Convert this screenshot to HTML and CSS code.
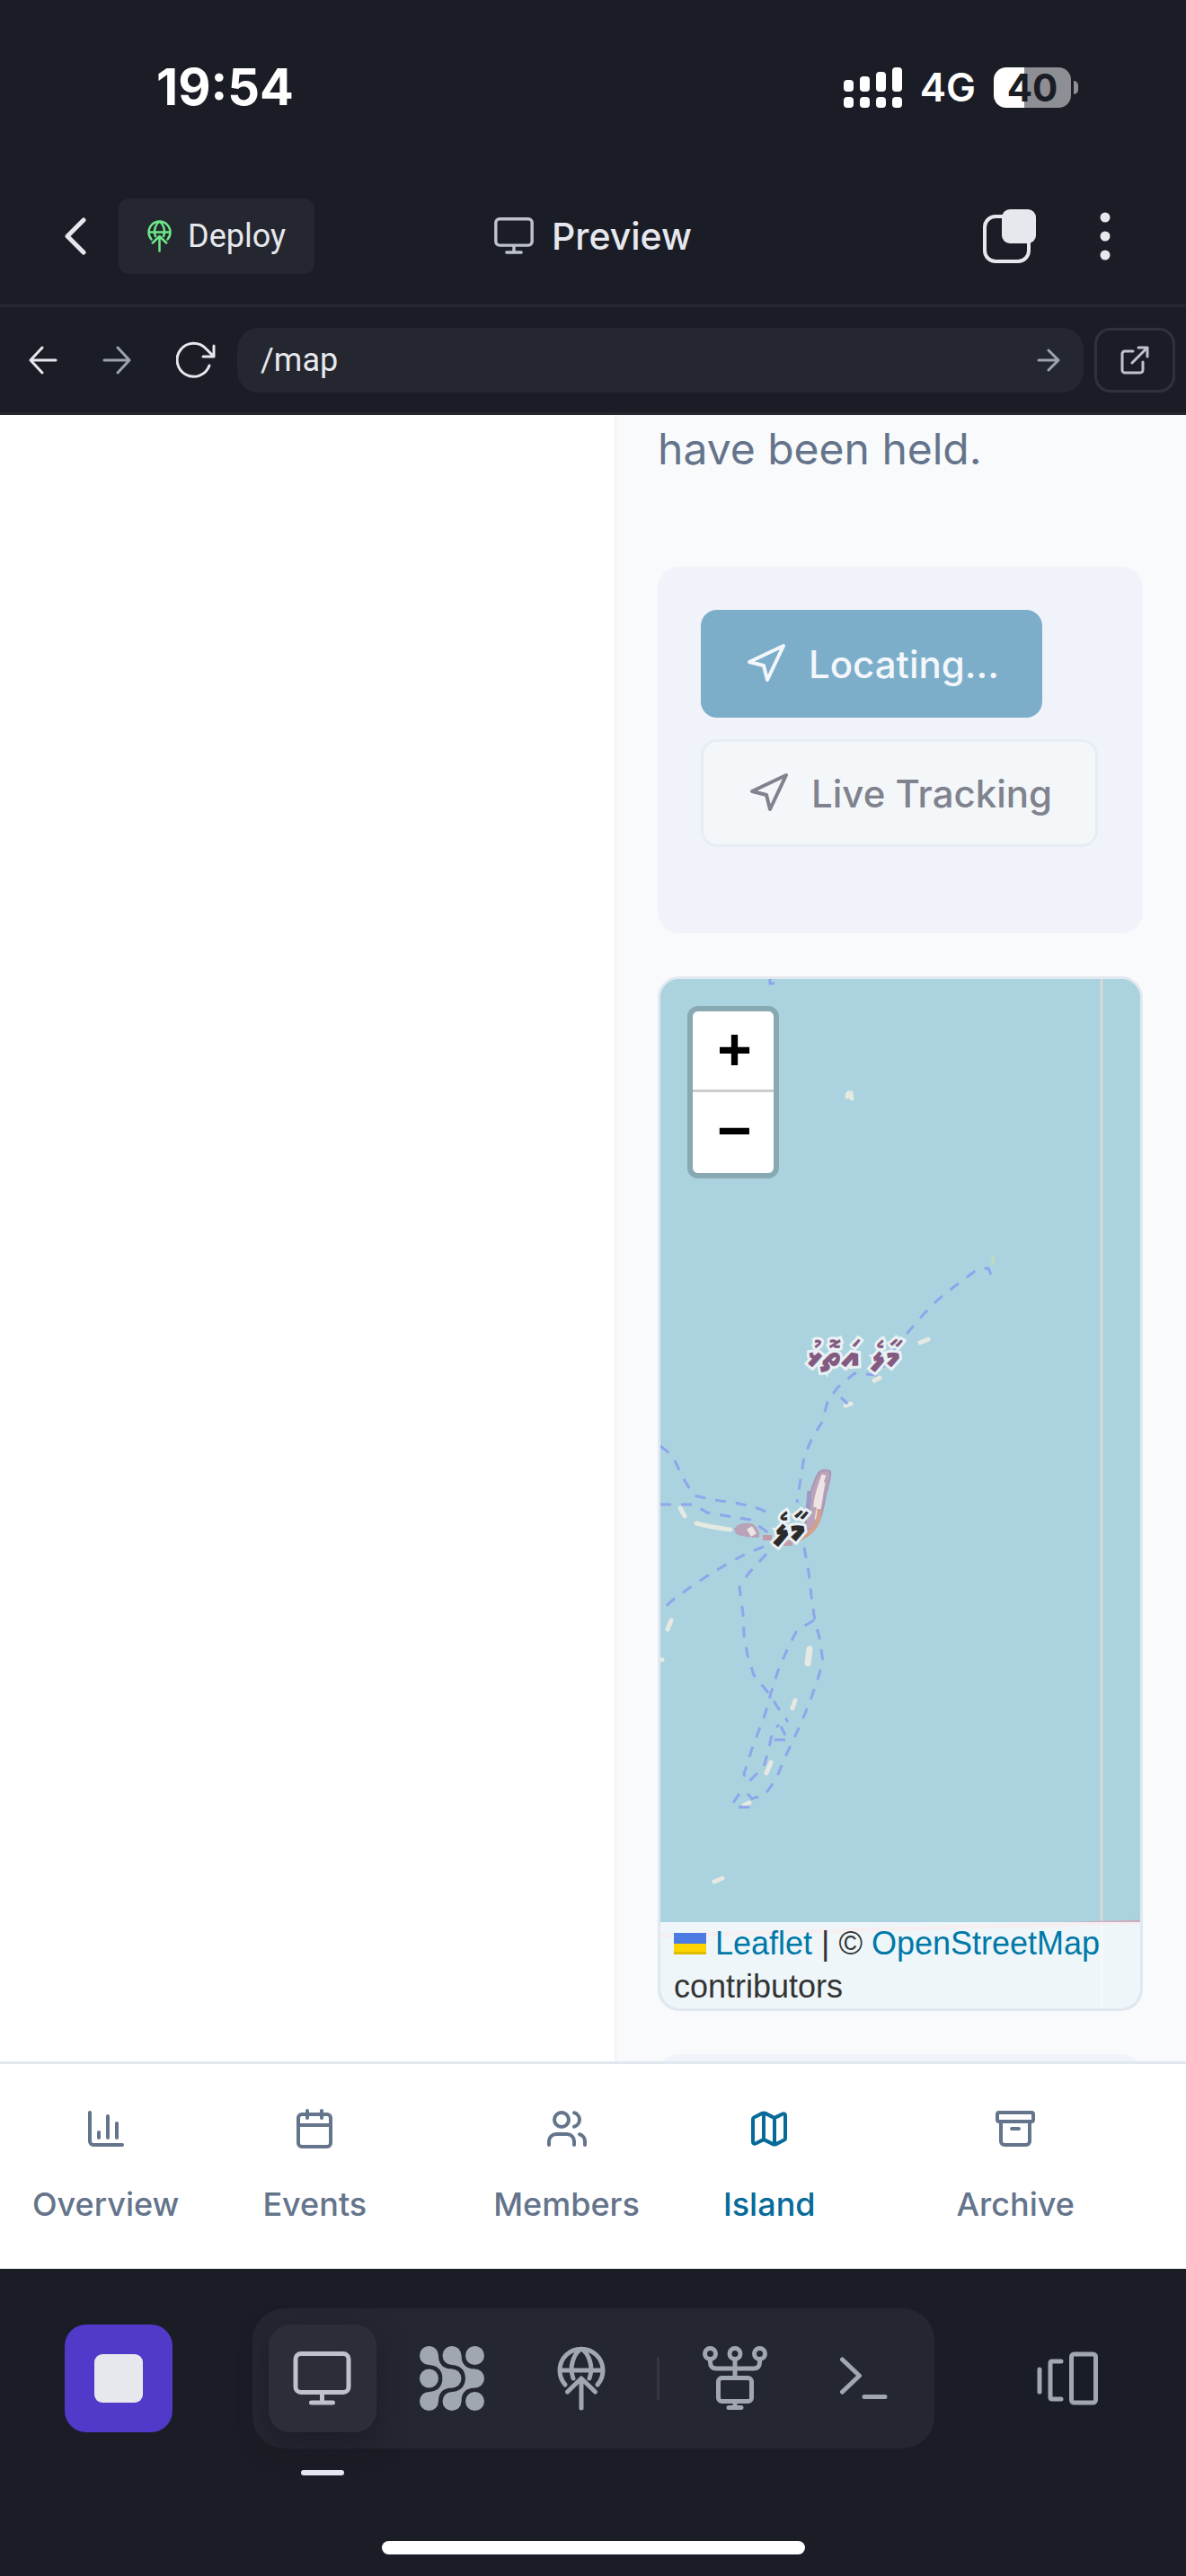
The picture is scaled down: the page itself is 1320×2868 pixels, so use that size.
FILE: index.html
```html
<!DOCTYPE html>
<html lang="en">
<head>
<meta charset="utf-8">
<meta name="viewport" content="width=device-width, initial-scale=1">
<title>Preview</title>
<link rel="stylesheet" href="styles.css">
</head>
<body>
<svg class="sprite" aria-hidden="true">
  <symbol id="monitor" viewBox="0 0 64 60" fill="none" stroke="currentColor" stroke-linecap="round" stroke-linejoin="round">
    <rect x="2.500" y="2.500" width="59" height="43" rx="6"/><path d="M32 46v11M20 57h24"/>
  </symbol>
  <symbol id="globe" viewBox="0 0 54 72" fill="none" stroke="currentColor" stroke-linecap="round" stroke-linejoin="round">
    <path d="M9 43A24 24 0 1 1 45 43M3 27h48M18 36C13 22 19 8 27 3C35 8 41 22 36 36M27 36v33M11.500 51L27 36l15.500 15"/>
  </symbol>
  <symbol id="navigation" viewBox="0 0 24 24" fill="none" stroke="currentColor" stroke-width="2" stroke-linecap="round" stroke-linejoin="round">
    <path d="M3 11 22 2 13 21 11 13z"/>
  </symbol>
</svg>
<div class="app">
  <header class="status">
    <time class="status-time">19:54</time>
    <div class="status-right">
      <svg class="signal" viewBox="0 0 65 45" fill="#fff" aria-hidden="true">
        <rect x="0" y="14" width="11" height="13" rx="4"/><rect x="18" y="10" width="11" height="17" rx="4"/><rect x="36" y="5" width="11" height="22" rx="4"/><rect x="54" y="0" width="11" height="27" rx="4"/>
        <rect x="0" y="33" width="11" height="12" rx="4"/><rect x="18" y="33" width="11" height="12" rx="4"/><rect x="36" y="33" width="11" height="12" rx="4"/><rect x="54" y="33" width="11" height="12" rx="4"/>
      </svg>
      <span class="network">4G</span>
      <span class="battery-wrap"><span class="battery">40</span><span class="battery-cap"></span></span>
    </div>
  </header>

  <div class="toolbar">
    <div class="toolbar-left">
      <button class="icon-button back" aria-label="Back">
        <svg width="24" height="42" viewBox="0 0 24 42" fill="none" stroke="currentColor" stroke-width="5" stroke-linecap="round" stroke-linejoin="round"><path d="M21 3L3 21l18 18"/></svg>
      </button>
      <button class="deploy"><svg class="deploy-icon" width="27" height="36" stroke-width="5"><use href="#globe"/></svg>Deploy</button>
    </div>
    <h1 class="title"><svg class="title-icon" width="44" height="41" stroke-width="5"><use href="#monitor"/></svg>Preview</h1>
    <div class="toolbar-right">
      <button class="icon-button" aria-label="Tabs">
        <svg width="60" height="60" viewBox="0 0 60 60"><rect x="2" y="8" width="49" height="50" rx="12" fill="none" stroke="currentColor" stroke-width="4"/><rect x="21" width="38" height="38" rx="9" fill="currentColor"/></svg>
      </button>
      <button class="icon-button" aria-label="More">
        <svg width="12" height="54" viewBox="0 0 12 54" fill="currentColor"><circle cx="6" cy="6" r="5.500"/><circle cx="6" cy="27" r="5.500"/><circle cx="6" cy="48" r="5.500"/></svg>
      </button>
    </div>
  </div>

  <form class="address">
    <div class="history">
      <button type="button" class="icon-button" aria-label="Go back"><svg width="32" height="32" viewBox="0 0 32 32" class="line"><path d="M30 16H2M15 2L2 16l13 14"/></svg></button>
      <button type="button" class="icon-button muted" aria-label="Go forward"><svg width="32" height="32" viewBox="0 0 32 32" class="line"><path d="M2 16h28M17 2l13 14-13 14"/></svg></button>
      <button type="button" class="icon-button" aria-label="Reload"><svg width="44" height="42" viewBox="0 0 44 42" class="line"><path d="M37 27A18.500 18.500 0 1 1 33 8L42 17M42 5v12H30"/></svg></button>
    </div>
    <label class="url"><input type="text" value="/map" aria-label="Address"><svg width="26" height="26" viewBox="0 0 26 26" class="line muted"><path d="M2 13h22M13 2l11 11-11 11"/></svg></label>
    <button type="button" class="external" aria-label="Open in new tab"><svg width="32" height="32" viewBox="0 0 32 32" class="line"><path d="M14 6H5a3 3 0 0 0-3 3v18a3 3 0 0 0 3 3h17a3 3 0 0 0 3-3V18M13 19L30 2M20 2h10v10"/></svg></button>
  </form>

  <div class="page">
    <aside class="blank"></aside>
    <main class="content">
      <p class="intro">have been held.</p>
      <section class="card controls">
        <button class="button primary" disabled><svg width="48" height="48"><use href="#navigation"/></svg>Locating...</button>
        <button class="button outline" disabled><svg width="48" height="48"><use href="#navigation"/></svg>Live Tracking</button>
      </section>
      <section class="map" aria-label="Map">
        <svg class="tiles" viewBox="0 0 534 1146" preserveAspectRatio="xMinYMin slice">
          <rect width="534" height="1146" fill="#aad3df"/>
          <g class="land">
            <path d="M208 131q0-5 4-4l1 6"/><path d="M289 405l9-4"/><path d="M238 447l6-3"/><path d="M206 475l6-2"/>
            <path d="M22 589l5 9M40 606q20 5 38 7"/><path d="M8 724l4-10M0 758h2"/><path d="M164 762l2-16" stroke-width="7"/><path d="M147 812l3-9"/><path d="M118 884l5-12"/><path d="M93 920l6-3"/><path d="M60 1005l9-4"/>
            <path d="M370 310v7" stroke="#c4dbb4" stroke-width="3"/>
          </g>
          <path d="M176 550q4-5 13-2q1 6-5 26q-4 24-9 33l-12 7q-3-10 0-28q7-26 13-36z" fill="#b8a3b8" stroke="#ad96b4" stroke-width="2"/>
          <path d="M182 552q-10 28-9 36M181 560l-7 42" stroke="#eee4e6" stroke-width="5" fill="none"/>
          <path d="M166 570l-2 24" stroke="#9c9ac4" stroke-width="5"/>
          <path d="M177 590q0 18-12 27t-22 9" stroke="#d3a08b" stroke-width="5" fill="none"/>
          <path d="M82 612q6-8 20-6q10 7 8 16q-16 0-26-4z" fill="#b8a3b8"/><path d="M99 611l5 8" stroke="#eee4e6" stroke-width="7"/>
          <path d="M114 622h10M135 628h12" stroke="#c09bac" stroke-width="6"/>
          <g class="ferries">
            <path d="M122 -2v7h7"/>
            <path d="M368 329l-3-7-12 1-24 18-19 15-17 17-29 34-22 34-26-2-19 16-11 16-6 22-12 20-8 19-4 25-4 26"/>
            <path d="M201 466q5 4 7 7"/>
            <path d="M0 520l13 10 12 25 12 20 23 5 23 3 22 5 20 8"/><path d="M0 585h37l15 9 23 4 25 4 22 16"/>
            <path d="M115 632l-20 8-22 12-20 12-21 14-19 14-13 12"/>
            <path d="M118 640l-20 22-10 15 4 30 1 23 4 23 7 22 18 22 8 13 12 17"/>
            <path d="M160 633l5 27 3 27 4 28 5 18 4 27-6 20-8 23-9 22-10 22-10 21-9 22-13 19-13 3"/>
            <path d="M171 714l-19 11-11 22-10 23-8 25-6 22-8 21-8 22-8 25 4 10 18-18 5-17 5-23 7-7"/>
            <path d="M134 832l5 10M127 847h12M81 917l7-10M97 907l6 7M87 922h12"/>
          </g>
          <path d="M491 0v1146" stroke="#d8d9da" stroke-width="3"/>
          <path d="M0 1065L534 1050" stroke="#cbaebd" stroke-width="5"/>
          <text class="atoll" x="214" y="434">މާލެ އަތޮޅު</text>
          <text class="city" x="143" y="628">މާލެ</text>
        </svg>
        <div class="zoom"><button aria-label="Zoom in">+</button><button aria-label="Zoom out">−</button></div>
        <div class="attribution"><a href="#leaflet"><svg width="36" height="24" viewBox="0 0 12 8" aria-hidden="true"><path fill="#4c7be1" d="M0 0h12v4H0z"/><path fill="#ffd500" d="M0 4h12v3H0z"/><path fill="#e0bc00" d="M0 7h12v1H0z"/></svg> Leaflet</a> | © <a href="#osm">OpenStreetMap</a> contributors</div>
      </section>
      <section class="card next"></section>
    </main>
  </div>

  <nav class="tabs">
    <a href="#overview"><svg class="lucide" viewBox="0 0 24 24"><path d="M3 3v16a2 2 0 0 0 2 2h16M8 17v-3M13 17V5M18 17V9"/></svg>Overview</a>
    <a href="#events"><svg class="lucide" viewBox="0 0 24 24"><rect x="3" y="4" width="18" height="18" rx="2"/><path d="M8 2v4M16 2v4M3 10h18"/></svg>Events</a>
    <a href="#members" class="spaced"><svg class="lucide" viewBox="0 0 24 24"><path d="M16 21v-2a4 4 0 0 0-4-4H6a4 4 0 0 0-4 4v2M16 3.128a4 4 0 0 1 0 7.744M22 21v-2a4 4 0 0 0-3-3.870"/><circle cx="9" cy="7" r="4"/></svg>Members</a>
    <a href="#island" class="current" aria-current="page"><svg class="lucide" viewBox="0 0 24 24"><path d="M14.106 5.553a2 2 0 0 0 1.788 0l3.659-1.830A1 1 0 0 1 21 4.619v12.764a1 1 0 0 1-.553.894l-4.553 2.277a2 2 0 0 1-1.788 0l-4.212-2.106a2 2 0 0 0-1.788 0l-3.659 1.830A1 1 0 0 1 3 19.381V6.618a1 1 0 0 1 .553-.894l4.553-2.277a2 2 0 0 1 1.788 0zM15 5.764v15M9 3.236v15"/></svg>Island</a>
    <a href="#archive" class="last"><svg class="lucide" viewBox="0 0 24 24"><rect x="2" y="3" width="20" height="5" rx="1"/><path d="M4 8v11a2 2 0 0 0 2 2h12a2 2 0 0 0 2-2V8M10 12h4"/></svg>Archive</a>
  </nav>

  <footer class="dock">
    <div class="dock-row">
      <button class="tool stop" aria-label="Stop"><span></span></button>
      <div class="tools">
        <button class="tool active" aria-label="Preview"><svg width="65" height="60" stroke-width="5"><use href="#monitor"/></svg></button>
        <button class="tool" aria-label="Agent">
          <svg width="72" height="72" viewBox="0 0 72 72" fill="currentColor"><circle cx="10.500" cy="10.500" r="10.500"/><circle cx="36" cy="10.500" r="10.500"/><circle cx="61.500" cy="10.500" r="10.500"/><circle cx="10.500" cy="36" r="10.500"/><circle cx="36" cy="36" r="10.500"/><circle cx="61.500" cy="36" r="10.500"/><circle cx="10.500" cy="61.500" r="10.500"/><circle cx="36" cy="61.500" r="10.500"/><circle cx="61.500" cy="61.500" r="10.500"/><path d="M21 10.500Q21 25 36 25.500V46.500Q21 47 21 61.500L10.500 51Q25 50 25.500 36Q25 22 10.500 21zM46.500 10.500Q46.500 25 61.500 25.500V46.500Q46.500 47 46.500 61.500L36 51Q50.500 50 51 36Q50.500 22 36 21z"/></svg>
        </button>
        <button class="tool" aria-label="Deployments"><svg width="54" height="72" stroke-width="5"><use href="#globe"/></svg></button>
        <span class="divider"></span>
        <button class="tool" aria-label="Connections">
          <svg width="72" height="72" viewBox="0 0 72 72" class="dock-line"><circle cx="8.500" cy="8.500" r="6"/><circle cx="36" cy="8.500" r="6"/><circle cx="63.500" cy="8.500" r="6"/><path d="M36 15v20M8.500 15v3q0 7 7 7h41q7 0 7-7v-3M36 63v5M29 68.500h14"/><rect x="17.500" y="35.500" width="37" height="26" rx="4"/></svg>
        </button>
        <button class="tool" aria-label="Shell"><svg width="53" height="48" viewBox="0 0 53 48" class="dock-line"><path d="M2.500 3l19 18-19 18M27 44.500h23"/></svg></button>
      </div>
      <button class="tool" aria-label="Switch panes"><svg width="68" height="60" viewBox="0 0 68 60" class="dock-line"><path d="M3 20v25M27 11H17q-2 0-2 2v38q0 2 2 2h10"/><rect x="38.500" y="3" width="27" height="54" rx="3"/></svg></button>
    </div>
    <div class="home"></div>
  </footer>
</div>
</body>
</html>
```
FILE: styles.css
```css
* { box-sizing: border-box; }
body { margin: 0; background: #1b1d26; color: #e6e8ee; font-family: Inter, "Liberation Sans", sans-serif; }
button { border: 0; padding: 0; margin: 0; background: none; color: inherit; font: inherit; }
a { text-decoration: none; }
svg { display: block; flex: none; }
.sprite { position: absolute; width: 0; height: 0; }
.app { display: flex; flex-direction: column; height: 100vh; }

.status { flex: none; display: flex; align-items: center; justify-content: space-between; height: 186px; padding: 8px 120px 0 174px; color: #fff; }
.status-time { font-size: 56px; font-weight: 700; }
.status-right { display: flex; align-items: center; gap: 20px; }
.signal { width: 65px; height: 45px; }
.network { font-size: 44px; font-weight: 600; }
.battery-wrap { display: flex; align-items: center; gap: 3px; }
.battery { width: 86px; height: 45px; border-radius: 14px; background: linear-gradient(90deg, #fff 40%, #8e8f94 40%); color: #1b1d26; font-size: 42px; font-weight: 700; line-height: 45px; text-align: center; }
.battery-cap { width: 5px; height: 15px; border-radius: 0 5px 5px 0; background: #8e8f94; }

.toolbar { flex: none; display: grid; grid-template-columns: 1fr auto 1fr; align-items: center; height: 156px; padding: 0 72px; border-bottom: 3px solid #262831; }
.toolbar-left { display: flex; align-items: center; gap: 36px; }
.icon-button { display: flex; align-items: center; justify-content: center; }
.deploy { display: flex; align-items: center; gap: 18px; height: 84px; padding: 0 32px; border-radius: 12px; background: #242730; font: 36px Roboto, sans-serif; }
.deploy-icon { color: #6ee787; }
.title { display: flex; align-items: center; gap: 20px; margin: 0; font-size: 41px; font-weight: 500; }
.title-icon { color: #bfc2cd; }
.toolbar-right { display: flex; align-items: center; justify-content: flex-end; gap: 70px; padding-right: 12px; }

.address { flex: none; display: flex; align-items: center; gap: 12px; height: 120px; padding: 0 12px 0 32px; border-bottom: 3px solid #262831; }
.history { display: flex; align-items: center; gap: 50px; padding-right: 12px; }
.line { fill: none; stroke: currentColor; stroke-width: 3; stroke-linecap: round; stroke-linejoin: round; }
.muted { color: #9da2ad; }
.url { flex: 1; display: flex; align-items: center; height: 72px; padding: 0 26px; border-radius: 24px; background: #242730; }
.url input { flex: 1; min-width: 0; border: 0; padding: 0; outline: 0; background: none; color: #e6e8ee; font: 36px Roboto, sans-serif; }
.external { display: flex; align-items: center; justify-content: center; width: 90px; height: 72px; border: 3px solid #2f313d; border-radius: 18px; color: #bfc2cd; }

.page { flex: 1; min-height: 0; display: flex; overflow: hidden; background: #fff; }
.blank { flex: 0 0 684px; }
.content { flex: 1; min-width: 0; display: flex; flex-direction: column; gap: 48px; padding: 0 48px; background: #f9fafc; box-shadow: inset 2px 0 3px rgba(0, 0, 0, 0.03); }
.intro { flex: none; margin: 0 0 45px; color: #64748b; font-size: 48px; line-height: 76px; }
.card { flex: none; border-radius: 24px; background: #f0f3f9; }
.controls { display: flex; flex-wrap: wrap; gap: 24px; padding: 48px 48px 96px; }
.button { display: flex; align-items: center; gap: 24px; height: 120px; padding: 0 48px; border-radius: 18px; font-size: 42px; font-weight: 500; }
.primary { background: #7daec9; color: #f3f7fb; }
.outline { border: 3px solid #e8ecf3; background: #f3f7fa; color: #80828d; }
.next { height: 240px; }

.map { position: relative; flex: none; height: 1152px; overflow: hidden; border: 3px solid #e2e8f0; border-radius: 24px; background: #aad3df; }
.tiles { width: 100%; height: 100%; }
.land { fill: none; stroke: #e6e8e2; stroke-width: 5; stroke-linecap: round; }
.ferries { fill: none; stroke: #8fa5ec; stroke-width: 3; stroke-dasharray: 12 11; }
.atoll, .city { font-family: "Noto Sans Thaana", "Noto Sans", sans-serif; font-weight: 700; text-anchor: middle; paint-order: stroke; stroke: #eaf1f4; stroke-width: 6px; }
.atoll { fill: #835a80; font-size: 44px; }
.city { fill: #2b2b2b; font-size: 48px; }
.zoom { position: absolute; left: 30px; top: 30px; border: 6px solid rgba(0, 0, 0, 0.2); border-radius: 12px; background-clip: padding-box; }
.zoom button { display: block; width: 90px; height: 90px; padding: 6px 0 0 3px; background: #fff; color: #000; font: bold 66px/84px "Liberation Mono", monospace; border-radius: 0 0 6px 6px; }
.zoom button:first-child { border-bottom: 3px solid #ccc; border-radius: 6px 6px 0 0; }
.attribution { position: absolute; left: 0; right: 0; bottom: 0; padding: 0 15px; background: rgba(255, 255, 255, 0.8); color: #333; font: 36px/48px "Liberation Sans", Arial, sans-serif; }
.attribution a { color: #0078a8; }
.attribution svg { display: inline-block; }

.tabs { flex: none; display: flex; gap: 93px; height: 231px; padding: 48px 36px 0; border-top: 3px solid #e2e8f0; background: #fff; }
.tabs a { display: flex; flex-direction: column; align-items: center; gap: 36px; color: #64748b; font-size: 36px; font-weight: 500; line-height: 48px; }
.tabs .current { color: #066b99; }
.tabs .spaced { margin-left: 48px; }
.tabs .last { margin-left: 64px; }
.lucide { width: 48px; height: 48px; fill: none; stroke: currentColor; stroke-width: 2; stroke-linecap: round; stroke-linejoin: round; }

.dock { flex: none; display: flex; flex-direction: column; align-items: center; justify-content: space-between; height: 342px; padding: 44px 0 24px; }
.dock-row { align-self: stretch; display: flex; align-items: center; justify-content: space-between; padding: 0 72px; color: #a1a7b1; }
.tools { display: flex; align-items: center; gap: 24px; padding: 18px; border-radius: 36px; background: #242730; }
.tool { position: relative; display: flex; align-items: center; justify-content: center; width: 120px; height: 120px; border-radius: 24px; }
.active { background: #2b2d38; color: #bfc2cb; box-shadow: 0 12px 30px rgba(20, 20, 30, 0.5); }
.active::after { content: ""; position: absolute; left: 36px; bottom: -48px; width: 48px; height: 6px; border-radius: 3px; background: #e4e5ee; }
.stop { background: #5139c9; }
.stop span { width: 54px; height: 54px; border-radius: 9px; background: #e6e8ee; }
.divider { width: 3px; height: 48px; background: #343643; }
.dock-line { fill: none; stroke: currentColor; stroke-width: 5; stroke-linecap: round; stroke-linejoin: round; }
.home { width: 471px; height: 15px; border-radius: 8px; background: #fff; }
```
